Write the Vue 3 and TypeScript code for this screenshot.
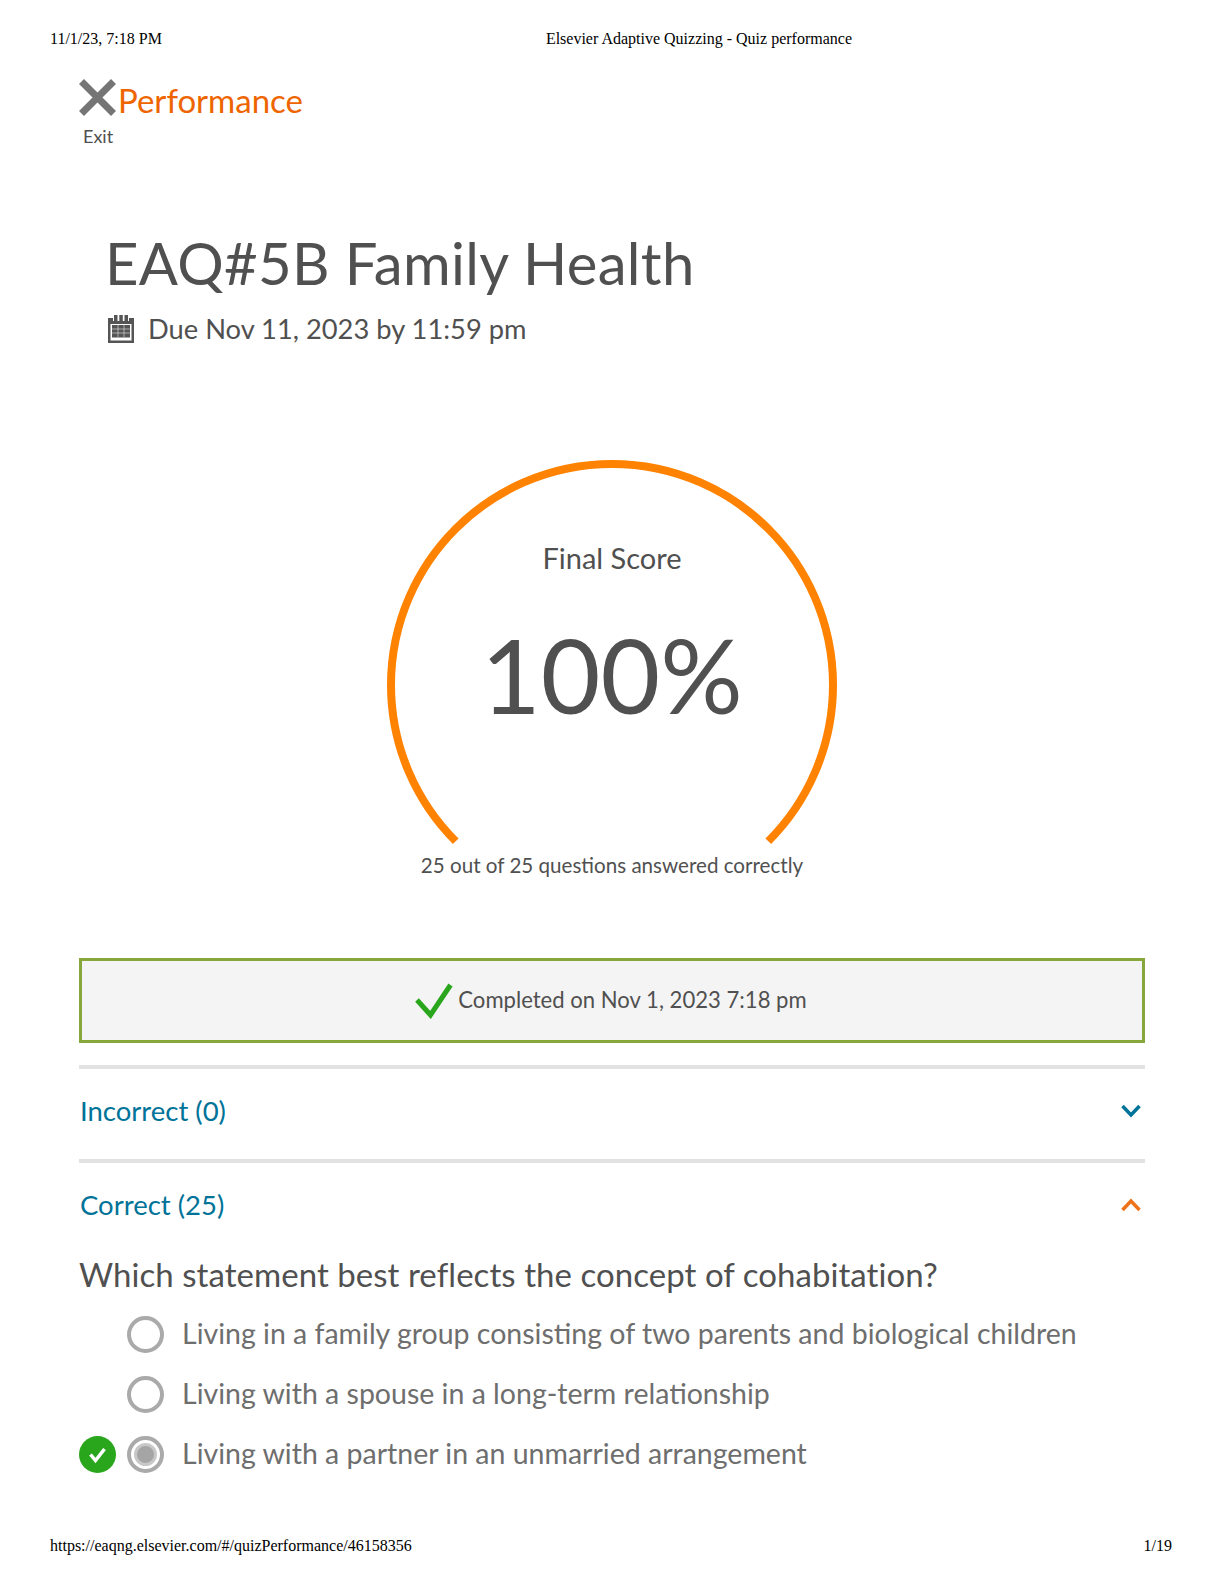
<template>
  <div class="page">
    <header class="print-head">
      <span class="print-date">11/1/23, 7:18 PM</span>
      <span class="print-title">Elsevier Adaptive Quizzing - Quiz performance</span>
    </header>

    <main class="app">
      <div class="topbar">
        <div class="exit">
          <svg class="exit-icon" width="37" height="37" viewBox="0 0 37 37" aria-hidden="true">
            <path d="M2.500 2.500 L34.500 34.500 M34.500 2.500 L2.500 34.500" stroke="#757575" stroke-width="7" />
          </svg>
          <span class="exit-label">Exit</span>
        </div>
        <span class="page-name">Performance</span>
      </div>

      <section class="quiz-head">
        <h1>EAQ#5B Family Health</h1>
        <div class="due">
          <svg width="28" height="28" viewBox="0 0 28 28" aria-hidden="true">
            <path d="M1 3h5v3h16V3h5v25H1z M3.500 9v16.500h21V9z" fill="#555" fill-rule="evenodd" />
            <path d="M7 0h3.500v6H7z M12.300 0h3.500v6h-3.500z M17.500 0H21v6h-3.500z" fill="#555" />
            <path d="M5 10h18v12.500H5z" fill="#555" />
            <path d="M5 14h18M5 18h18M11 10v12M17 10v12" stroke="#fff" stroke-width="0.500" />
          </svg>
          <span>Due Nov 11, 2023 by 11:59 pm</span>
        </div>
      </section>

      <section class="gauge">
        <svg class="gauge-ring" width="450" height="390" viewBox="0 0 450 390" aria-hidden="true">
          <path :d="arcPath" fill="none" stroke="#ff8200" stroke-width="8" />
        </svg>
        <div class="gauge-label">Final Score</div>
        <div class="gauge-value">100%</div>
        <div class="gauge-note">25 out of 25 questions answered correctly</div>
      </section>

      <div class="completed">
        <svg width="38" height="36" viewBox="0 0 38 36" aria-hidden="true">
          <path d="M2 17 L15.500 32 L35.500 2" fill="none" stroke="#2aa61d" stroke-width="5" />
        </svg>
        <span>Completed on Nov 1, 2023 7:18 pm</span>
      </div>

      <div class="accordion-row">
        <span>Incorrect (0)</span>
        <svg width="20" height="14" viewBox="0 0 20 14" aria-hidden="true">
          <path d="M1.500 2 L10 11 L18.500 2" fill="none" stroke="#007398" stroke-width="3.500" />
        </svg>
      </div>
      <div class="accordion-row">
        <span>Correct (25)</span>
        <svg width="20" height="14" viewBox="0 0 20 14" aria-hidden="true">
          <path d="M1.500 12 L10 3 L18.500 12" fill="none" stroke="#ee7219" stroke-width="3.500" />
        </svg>
      </div>

      <h2 class="question">Which statement best reflects the concept of cohabitation?</h2>
      <ul class="options">
        <li v-for="opt in options" :key="opt.text" class="option">
          <span class="mark">
            <svg v-if="opt.chosen" width="37" height="37" viewBox="0 0 37 37" aria-hidden="true">
              <circle cx="18.500" cy="18.500" r="18.500" fill="#2aa61d" />
              <path d="M11.500 18.500 L16.500 24.500 L25.500 13" fill="none" stroke="#fff" stroke-width="3.500" />
            </svg>
          </span>
          <span class="radio" :class="{ 'radio--on': opt.chosen }"></span>
          <span class="option-text">{{ opt.text }}</span>
        </li>
      </ul>
    </main>

    <footer class="print-foot">
      <span>https://eaqng.elsevier.com/#/quizPerformance/46158356</span>
      <span>1/19</span>
    </footer>
  </div>
</template>

<script setup lang="ts">
  import { computed } from 'vue'

  interface Option {
    text: string
    chosen: boolean
  }

  const options: Option[] = [
    { text: 'Living in a family group consisting of two parents and biological children', chosen: false },
    { text: 'Living with a spouse in a long-term relationship', chosen: false },
    { text: 'Living with a partner in an unmarried arrangement', chosen: true }
  ]

  // ring is open at the bottom, 45deg either side of straight down
  const arcPath = computed(() => {
    const r = 221
    const c = 225
    const off = r * Math.SQRT1_2
    return `M ${c - off} ${c + off} A ${r} ${r} 0 1 1 ${c + off} ${c + off}`
  })
</script>

<style>
  html,
  body {
    margin: 0;
    background: #fff;
  }
</style>

<style scoped>
  .page {
    width: 1224px;
    height: 1584px;
    display: flex;
    flex-direction: column;
    overflow: hidden;
    font-family: Lato, 'Noto Sans', sans-serif;
    color: #505050;
  }

  .print-head,
  .print-foot {
    font-family: 'Liberation Serif', serif;
    font-size: 16px;
    line-height: 18px;
    color: #000;
  }

  .print-head {
    display: flex;
    padding: 30px 0 0 50px;
    height: 18px;
  }

  .print-title {
    margin-left: 384px;
  }

  .print-foot {
    display: flex;
    justify-content: space-between;
    padding: 0 52px 0 50px;
    margin-top: auto;
    margin-bottom: 29px;
  }

  .app {
    padding: 31px 79px 0;
  }

  .topbar {
    display: flex;
    align-items: flex-start;
    height: 72px;
  }

  .exit {
    display: flex;
    flex-direction: column;
    width: 39px;
  }

  .exit-icon {
    display: block;
  }

  .exit-label {
    margin: 9px 0 0 4px;
    font-size: 18px;
    line-height: 22px;
  }

  .page-name {
    font-size: 33px;
    line-height: 42px;
    color: #ee6500;
  }

  .quiz-head {
    padding: 80px 0 0 26px;
  }

  .quiz-head h1 {
    margin: 0;
    font-size: 58px;
    font-weight: 400;
    line-height: 64px;
    letter-spacing: 0.3px;
  }

  .due {
    display: flex;
    align-items: center;
    gap: 13px;
    margin: 16px 0 0 2px;
    font-size: 27.3px;
    line-height: 36px;
  }

  .gauge {
    position: relative;
    display: flex;
    flex-direction: column;
    align-items: center;
    margin-top: 113px;
    height: 498px;
    text-align: center;
  }

  .gauge-ring {
    position: absolute;
    top: 0;
    left: 308px;
  }

  .gauge-label {
    margin-top: 80px;
    font-size: 29px;
    line-height: 36px;
  }

  .gauge-value {
    margin-top: 38px;
    font-size: 103px;
    line-height: 120px;
  }

  .gauge-note {
    margin-top: 118px;
    font-size: 20.6px;
    line-height: 26px;
  }

  .completed {
    display: flex;
    align-items: center;
    justify-content: center;
    gap: 5px;
    height: 79px;
    padding-right: 2px;
    border: 3px solid #86a73a;
    background: #f4f4f4;
    font-size: 22.1px;
  }

  .completed span {
    padding-bottom: 2px;
  }

  .accordion-row {
    display: flex;
    align-items: center;
    justify-content: space-between;
    height: 83px;
    padding: 0 4px 7px 1px;
    border-top: 4px solid #e2e2e2;
    font-size: 27.5px;
    color: #007398;
  }

  .completed + .accordion-row {
    margin-top: 22px;
  }

  .question {
    margin: -1px 0 0;
    font-size: 33px;
    font-weight: 400;
    line-height: 44px;
    letter-spacing: 0.05px;
  }

  .options {
    list-style: none;
    margin: 20px 0 0;
    padding: 0;
    display: flex;
    flex-direction: column;
    gap: 23px;
  }

  .option {
    display: flex;
    align-items: center;
    height: 37px;
  }

  .mark {
    display: block;
    width: 48px;
    height: 37px;
  }

  .radio {
    box-sizing: border-box;
    position: relative;
    width: 37px;
    height: 37px;
    border: 4px solid #aaa;
    border-radius: 50%;
  }

  .radio--on::after {
    content: '';
    position: absolute;
    inset: 3px;
    border-radius: 50%;
    background: #a5a5a5;
    border: 3px solid #c8c8c8;
    box-sizing: border-box;
  }

  .option-text {
    margin-left: 18px;
    padding-bottom: 3px;
    font-size: 28.5px;
    line-height: 34px;
    color: #6e6e6e;
  }
</style>
